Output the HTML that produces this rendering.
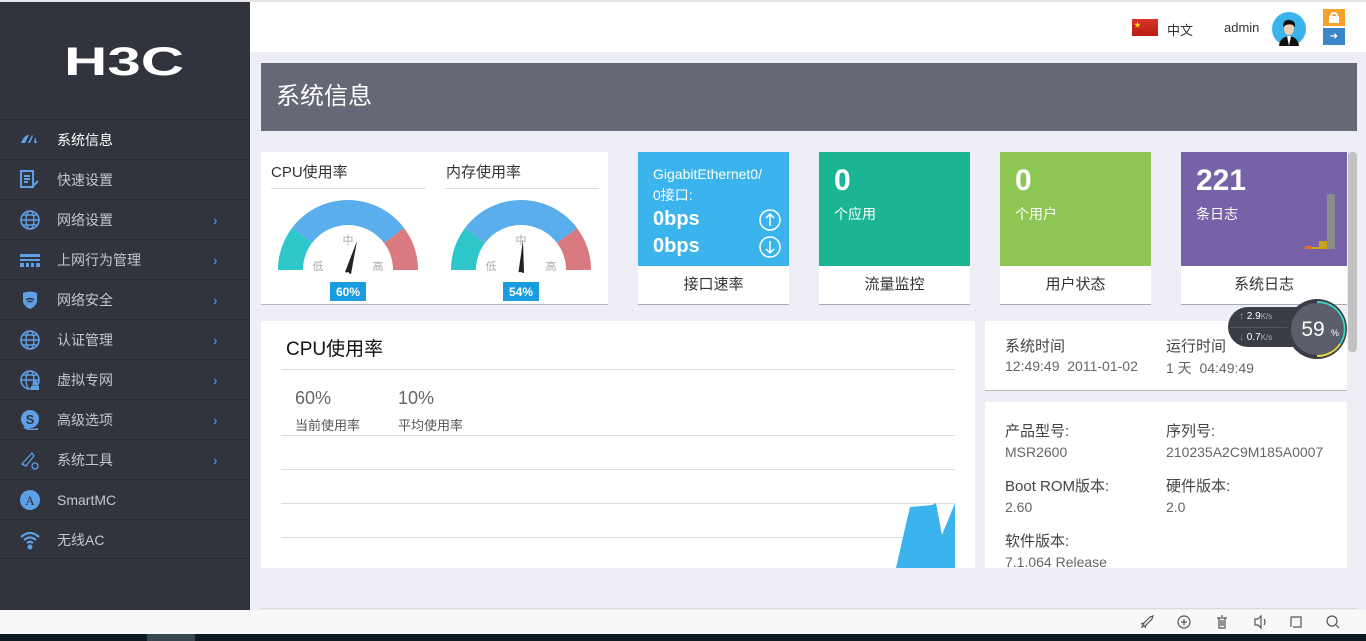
<!DOCTYPE html>
<html><head><meta charset="utf-8"><style>
*{margin:0;padding:0;box-sizing:border-box}
body{width:1366px;height:641px;overflow:hidden;background:#eeeef6;font-family:"Liberation Sans","Noto Sans CJK SC",sans-serif;position:relative}
.a{position:absolute}
#side{left:0;top:2px;width:250px;height:608px;background:#31343d}
.mi{position:absolute;left:0;width:250px;height:40px;border-top:1px solid #272a31;color:#c5c7cc;font-size:14px;line-height:40px}
.mi span{position:absolute;left:57px}
.mi .ic{position:absolute;left:20px;top:10px;width:20px;height:20px}
.mi .ar{position:absolute;left:213px;color:#3d8ee0;font-size:14px}
.card{position:absolute;background:#fff;border-bottom:1px solid #b9bac0}
.tile{position:absolute;top:152px;height:153px;background:#fff;border-bottom:1px solid #aaa}
.tile .t{height:114px;color:#fff;padding:12px 15px;position:relative}
.tile .b{text-align:center;font-size:15px;color:#333;line-height:38px}
.big{font-size:30px;font-weight:bold}
.lbl{font-size:14px;color:#444}
.val{font-size:14px;color:#666}
</style></head><body>
<div class="a" style="left:0;top:0;width:1366px;height:2px;background:#e3e3e8"></div>
<div class="a" style="left:250px;top:2px;width:1116px;height:50px;background:#fff"></div>
<!-- header right -->
<div class="a" style="left:1132px;top:19px;width:26px;height:17px;background:linear-gradient(#d8342a,#b81d16)"></div>
<div class="a" style="left:1134px;top:20px;color:#f7d51d;font-size:7px">★</div>
<div class="a" style="left:1167px;top:20px;font-size:13px;color:#333">中文</div>
<div class="a" style="left:1224px;top:20px;font-size:13px;color:#333">admin</div>
<svg class="a" style="left:1272px;top:12px" width="34" height="34" viewBox="0 0 34 34"><circle cx="17" cy="17" r="17" fill="#3bb4ec"/><path d="M7 34 Q8 25 17 24 Q26 25 27 34Z" fill="#111"/><path d="M15 24 L17 34 L19 24Z" fill="#fff"/><ellipse cx="17" cy="17" rx="5" ry="6" fill="#f2cfae"/><path d="M11 15 Q11 7 18 8 Q24 9 23 15 Q20 11 14 13Z" fill="#111"/></svg>
<div class="a" style="left:1323px;top:9px;width:22px;height:17px;background:#f7a12a"></div>
<div class="a" style="left:1330px;top:12px;width:8px;height:10px;border:2px solid #fff;border-radius:4px 4px 0 0;border-bottom:none"></div>
<div class="a" style="left:1329px;top:16px;width:10px;height:7px;background:#fff"></div>
<div class="a" style="left:1323px;top:28px;width:22px;height:17px;background:#3a86c8;color:#fff;font-size:10px;text-align:center;line-height:17px">➜</div>

<!-- sidebar -->
<div id="side" class="a">
<div class="a" style="left:64px;top:40px;color:#fff;font-size:40px;font-weight:bold;transform:scaleX(1.5);transform-origin:left;line-height:40px">H3C</div>
<div class="mi" style="top:117px;color:#fff"><svg class="ic" viewBox="0 0 20 20"><path d="M1 13 Q4 5 9 5 L5 13Z M8 13 L12 5 L13 6 L10 13Z M14 13 L15 7 L17 13Z" fill="#5ea0e8"/></svg><span>系统信息</span></div>
<div class="mi" style="top:157px"><svg class="ic" viewBox="0 0 20 20"><rect x="1" y="1" width="12" height="16" fill="none" stroke="#5ea0e8" stroke-width="2"/><path d="M4 6h6M4 9h6M4 12h4M11 18l7-7" stroke="#5ea0e8" stroke-width="2"/></svg><span>快速设置</span></div>
<div class="mi" style="top:197px"><svg class="ic" viewBox="0 0 20 20"><circle cx="10" cy="10" r="9" fill="none" stroke="#5ea0e8" stroke-width="1.6"/><ellipse cx="10" cy="10" rx="4" ry="9" fill="none" stroke="#5ea0e8" stroke-width="1.4"/><path d="M1 10h18M3 5h14M3 15h14" stroke="#5ea0e8" stroke-width="1.4"/></svg><span>网络设置</span><b class="ar">›</b></div>
<div class="mi" style="top:237px"><svg class="ic" viewBox="0 0 20 20"><path d="M0 4h20v3H0zM0 9h20v2H0zM0 13h4v4H0zM6 13h3v4H6zM11 13h3v4h-3zM16 13h4v4h-4z" fill="#5ea0e8"/></svg><span>上网行为管理</span><b class="ar">›</b></div>
<div class="mi" style="top:277px"><svg class="ic" viewBox="0 0 20 20"><path d="M3 3 Q10 0 17 3 V12 Q15 17 10 19 Q5 17 3 12Z" fill="#5ea0e8"/><path d="M6 10 Q10 7 14 10M7.5 12 Q10 10.5 12.5 12" stroke="#31343d" stroke-width="1.5" fill="none"/></svg><span>网络安全</span><b class="ar">›</b></div>
<div class="mi" style="top:317px"><svg class="ic" viewBox="0 0 20 20"><circle cx="10" cy="10" r="9" fill="none" stroke="#5ea0e8" stroke-width="1.6"/><ellipse cx="10" cy="10" rx="4" ry="9" fill="none" stroke="#5ea0e8" stroke-width="1.4"/><path d="M1 10h18M3 5h14M3 15h14" stroke="#5ea0e8" stroke-width="1.4"/></svg><span>认证管理</span><b class="ar">›</b></div>
<div class="mi" style="top:357px"><svg class="ic" viewBox="0 0 20 20"><circle cx="10" cy="10" r="9" fill="none" stroke="#5ea0e8" stroke-width="1.6"/><ellipse cx="10" cy="10" rx="4" ry="9" fill="none" stroke="#5ea0e8" stroke-width="1.4"/><path d="M1 10h18M3 5h14" stroke="#5ea0e8" stroke-width="1.4"/><circle cx="15" cy="13" r="2.5" fill="#5ea0e8"/><rect x="11" y="16" width="8" height="4" fill="#5ea0e8"/></svg><span>虚拟专网</span><b class="ar">›</b></div>
<div class="mi" style="top:397px"><svg class="ic" viewBox="0 0 20 20"><circle cx="10" cy="9" r="9" fill="#5ea0e8"/><text x="10" y="14" font-size="13" font-weight="bold" fill="#31343d" text-anchor="middle">S</text><path d="M4 17 Q10 21 18 19" stroke="#5ea0e8" stroke-width="2" fill="none"/></svg><span>高级选项</span><b class="ar">›</b></div>
<div class="mi" style="top:437px"><svg class="ic" viewBox="0 0 20 20"><path d="M2 14 L12 3 L14 6 L6 16Z" fill="none" stroke="#5ea0e8" stroke-width="1.3"/><circle cx="15" cy="16" r="3" fill="none" stroke="#5ea0e8" stroke-width="1.3"/></svg><span>系统工具</span><b class="ar">›</b></div>
<div class="mi" style="top:477px"><svg class="ic" viewBox="0 0 20 20"><circle cx="10" cy="10" r="10" fill="#5ea0e8"/><text x="10" y="15" font-size="13" fill="#31343d" text-anchor="middle" font-family="Liberation Serif">A</text></svg><span>SmartMC</span></div>
<div class="mi" style="top:517px;border-bottom:1px solid #272a31"><svg class="ic" viewBox="0 0 20 20"><path d="M1 7 Q10 -1 19 7M4 10 Q10 5 16 10M7 13 Q10 10.5 13 13" stroke="#5ea0e8" stroke-width="2.2" fill="none"/><circle cx="10" cy="17" r="2.5" fill="#5ea0e8"/></svg><span>无线AC</span></div>
</div>

<!-- banner -->
<div class="a" style="left:261px;top:63px;width:1096px;height:68px;background:#666876;color:#fff;font-size:24px;line-height:68px;padding-left:15px">系统信息</div>

<!-- gauges -->
<div class="card" style="left:261px;top:152px;width:347px;height:153px">
<div class="a" style="left:10px;top:9px;font-size:15px;color:#333">CPU使用率</div>
<div class="a" style="left:185px;top:9px;font-size:15px;color:#333">内存使用率</div>
<div class="a" style="left:10px;top:36px;width:155px;height:1px;background:#ddd"></div>
<div class="a" style="left:184px;top:36px;width:154px;height:1px;background:#ddd"></div>
<svg class="a" style="left:0;top:0" width="347" height="153">
<g transform="translate(87,118)">
<path d="M-70 0 A70 70 0 0 1 -56 -42 L-36 -27 A45 45 0 0 0 -45 0Z" fill="#2ec7c9"/>
<path d="M-56 -42 A70 70 0 0 1 56 -42 L36 -27 A45 45 0 0 0 -36 -27Z" fill="#5aaeec"/>
<path d="M56 -42 A70 70 0 0 1 70 0 L45 0 A45 45 0 0 0 36 -27Z" fill="#d87a80"/>
<text x="-30" y="0" font-size="11" fill="#aaa" text-anchor="middle">低</text><text x="0" y="-26" font-size="11" fill="#aaa" text-anchor="middle">中</text><text x="30" y="0" font-size="11" fill="#aaa" text-anchor="middle">高</text>
<path d="M-3 2 L9 -29 L3 4Z" fill="#222"/><circle cx="0" cy="3" r="1" fill="#fff"/>
<rect x="-18" y="12" width="36" height="19" fill="#1a9ce0"/><text x="0" y="26" font-size="12" fill="#fff" text-anchor="middle" font-weight="bold">60%</text>
</g>
<g transform="translate(260,118)">
<path d="M-70 0 A70 70 0 0 1 -56 -42 L-36 -27 A45 45 0 0 0 -45 0Z" fill="#2ec7c9"/>
<path d="M-56 -42 A70 70 0 0 1 56 -42 L36 -27 A45 45 0 0 0 -36 -27Z" fill="#5aaeec"/>
<path d="M56 -42 A70 70 0 0 1 70 0 L45 0 A45 45 0 0 0 36 -27Z" fill="#d87a80"/>
<text x="-30" y="0" font-size="11" fill="#aaa" text-anchor="middle">低</text><text x="0" y="-26" font-size="11" fill="#aaa" text-anchor="middle">中</text><text x="30" y="0" font-size="11" fill="#aaa" text-anchor="middle">高</text>
<path d="M-2.5 2 L2 -30 L3 3Z" fill="#222"/><circle cx="0" cy="3" r="1" fill="#fff"/>
<rect x="-18" y="12" width="36" height="19" fill="#1a9ce0"/><text x="0" y="26" font-size="12" fill="#fff" text-anchor="middle" font-weight="bold">54%</text>
</g></svg>
</div>

<!-- tiles -->
<div class="tile" style="left:638px;width:151px"><div class="t" style="background:#3bb4ee;font-size:14px;line-height:21px">GigabitEthernet0/<br>0接口:<div class="a big" style="left:15px;top:57px;font-size:20px">0bps</div><div class="a big" style="left:15px;top:84px;font-size:20px">0bps</div>
<svg class="a" style="left:121px;top:57px" width="22" height="50"><circle cx="11" cy="11" r="10" fill="none" stroke="#fff" stroke-width="1.5"/><path d="M11 5v12M7 9l4-4 4 4" stroke="#fff" fill="none" stroke-width="1.5"/><circle cx="11" cy="38" r="10" fill="none" stroke="#fff" stroke-width="1.5"/><path d="M11 32v12M7 40l4 4 4-4" stroke="#fff" fill="none" stroke-width="1.5"/></svg></div><div class="b">接口速率</div></div>
<div class="tile" style="left:819px;width:151px"><div class="t" style="background:#1ab694"><div class="big">0</div><div style="font-size:14px;margin-top:6px">个应用</div></div><div class="b">流量监控</div></div>
<div class="tile" style="left:1000px;width:151px"><div class="t" style="background:#8dc653"><div class="big">0</div><div style="font-size:14px;margin-top:6px">个用户</div></div><div class="b">用户状态</div></div>
<div class="tile" style="left:1181px;width:166px"><div class="t" style="background:#7762a8"><div class="big">221</div><div style="font-size:14px;margin-top:6px">条日志</div>
<div class="a" style="left:146px;top:42px;width:8px;height:55px;background:#8c8c8c"></div><div class="a" style="left:138px;top:89px;width:8px;height:8px;background:#c7a61e"></div><div class="a" style="left:131px;top:95px;width:7px;height:2px;background:#d6a21f"></div><div class="a" style="left:124px;top:94px;width:7px;height:3px;background:#ea6c1d"></div></div><div class="b">系统日志</div></div>
<div class="a" style="left:1348px;top:152px;width:9px;height:200px;background:#c2c2c2;border-radius:4px"></div>

<!-- cpu card -->
<div class="card" style="left:261px;top:321px;width:714px;height:247px;border:none;overflow:hidden">
<div class="a" style="left:25px;top:13px;font-size:19px;color:#111">CPU使用率</div>
<div class="a" style="left:20px;top:48px;width:674px;height:1px;background:#ddd"></div>
<div class="a" style="left:34px;top:67px;font-size:18px;color:#666">60%</div>
<div class="a" style="left:137px;top:67px;font-size:18px;color:#666">10%</div>
<div class="a" style="left:34px;top:94px;font-size:13px;color:#555">当前使用率</div>
<div class="a" style="left:137px;top:94px;font-size:13px;color:#555">平均使用率</div>
<div class="a" style="left:20px;top:114px;width:674px;height:1px;background:#ddd"></div>
<div class="a" style="left:20px;top:148px;width:674px;height:1px;background:#ddd"></div>
<div class="a" style="left:20px;top:182px;width:674px;height:1px;background:#ddd"></div>
<div class="a" style="left:20px;top:216px;width:674px;height:1px;background:#ddd"></div>
<svg class="a" style="left:634px;top:180px" width="60" height="67"><path d="M1 67 L8 36 L15 6 L37 4 L41 2 L47 34 L60 2 L60 67Z" fill="#3bb4ee"/></svg>
</div>

<!-- time card -->
<div class="card" style="left:985px;top:321px;width:362px;height:70px">
<div class="a lbl" style="left:20px;top:14px;font-size:15px">系统时间</div><div class="a val" style="left:20px;top:37px">12:49:49 &nbsp;2011-01-02</div>
<div class="a lbl" style="left:181px;top:14px;font-size:15px">运行时间</div><div class="a val" style="left:181px;top:37px">1 天 &nbsp;04:49:49</div>
</div>
<div class="card" style="left:985px;top:402px;width:362px;height:166px;border:none;overflow:hidden">
<div class="a lbl" style="left:20px;top:18px;font-size:15px">产品型号:</div><div class="a val" style="left:20px;top:42px">MSR2600</div>
<div class="a lbl" style="left:181px;top:18px;font-size:15px">序列号:</div><div class="a val" style="left:181px;top:42px">210235A2C9M185A0007</div>
<div class="a lbl" style="left:20px;top:73px;font-size:15px">Boot ROM版本:</div><div class="a val" style="left:20px;top:97px">2.60</div>
<div class="a lbl" style="left:181px;top:73px;font-size:15px">硬件版本:</div><div class="a val" style="left:181px;top:97px">2.0</div>
<div class="a lbl" style="left:20px;top:128px;font-size:15px">软件版本:</div><div class="a val" style="left:20px;top:152px">7.1.064 Release</div>
</div>

<!-- floating widget -->
<div class="a" style="left:1228px;top:307px;width:100px;height:40px;background:#3a3d46;border-radius:20px"></div>
<div class="a" style="left:1239px;top:311px;font-size:10px;color:#fff"><span style="color:#4ab0f0">↑</span> 2.9<span style="color:#aaa;font-size:8px">K/s</span></div>
<div class="a" style="left:1239px;top:332px;font-size:10px;color:#fff"><span style="color:#3fbf3f">↓</span> 0.7<span style="color:#aaa;font-size:8px">K/s</span></div>
<div class="a" style="left:1230px;top:327px;width:62px;height:1px;background:#555"></div>
<svg class="a" style="left:1286px;top:298px" width="62" height="62"><circle cx="31" cy="31" r="30" fill="#3a3d46"/><circle cx="31" cy="31" r="26" fill="#5c5f6b"/><path d="M31 4 A27 27 0 0 1 54 46" stroke="#3fd1c0" stroke-width="2" fill="none"/><path d="M54 46 A27 27 0 0 1 31 58" stroke="#e6d84a" stroke-width="2" fill="none"/><text x="27" y="38" font-size="21" fill="#fff" text-anchor="middle">59</text><text x="45" y="38" font-size="9" fill="#fff">%</text></svg>

<!-- footer -->
<div class="a" style="left:261px;top:608px;width:1096px;height:1px;background:#d8d8dd"></div>
<div class="a" style="left:0;top:610px;width:1366px;height:24px;background:#f8f8f8"></div>
<div class="a" style="left:1139px;top:614px;font-size:14px;color:#555">
<svg width="210" height="16" viewBox="0 0 210 16" style="vertical-align:top"><g stroke="#555" fill="none" stroke-width="1.2"><path d="M3 13 L5 9 L11 3 L14 2 L13 5 L7 11Z M2 10 L5 9 M7 11 L6 14"/><circle cx="45" cy="8" r="6"/><path d="M42 8h6M45 5v6"/><path d="M78 4h10M80 4v10h6V4M82 2h2M82 6v6M84 6v6"/><path d="M116 5h3l3-3v12l-3-3h-3Z M125 5 Q127 8 125 11"/><path d="M152 3h10v10h-8M152 3v10"/><circle cx="193" cy="7" r="5"/><path d="M197 11l3 3"/></g></svg></div>
<div class="a" style="left:0;top:634px;width:1366px;height:7px;background:#0c1a20"></div>
<div class="a" style="left:147px;top:634px;width:48px;height:7px;background:#38474d"></div>
</body></html>
